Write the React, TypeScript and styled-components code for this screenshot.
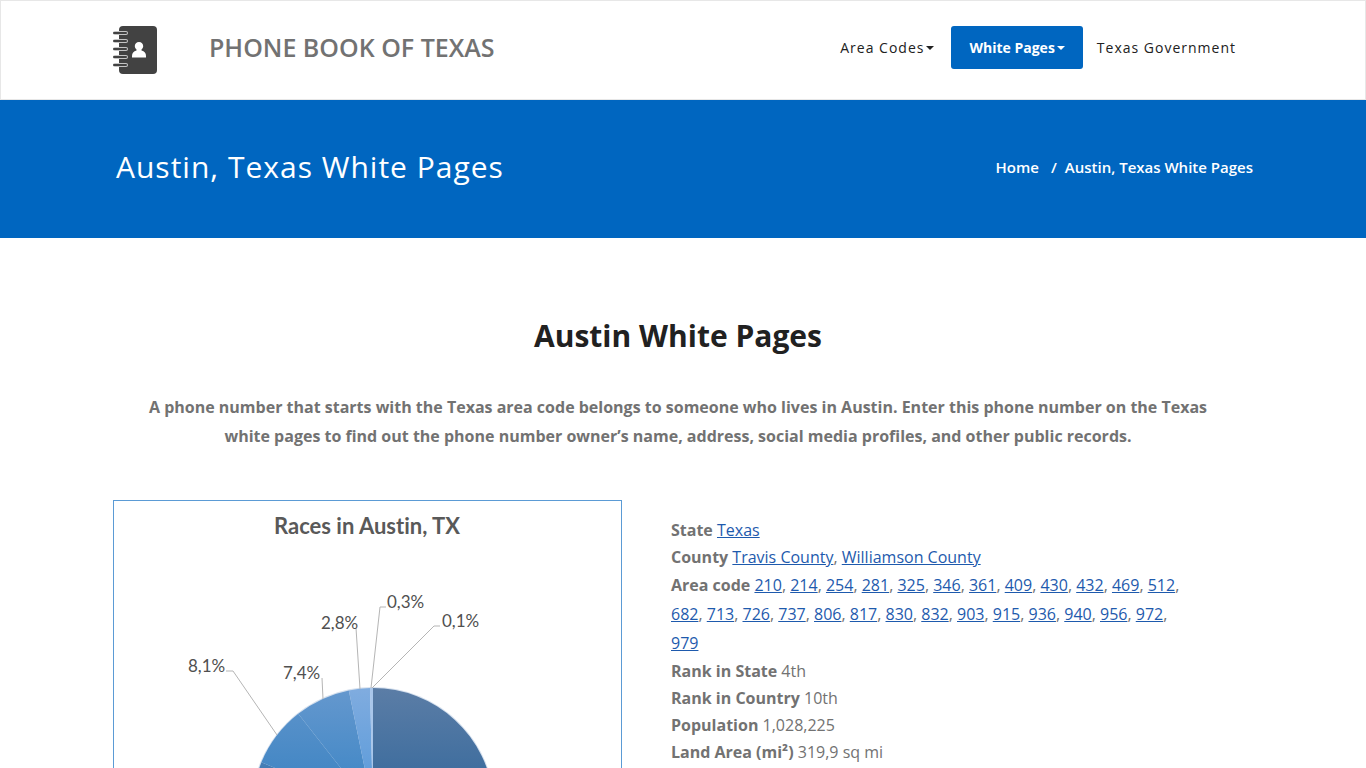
import React from "react";
import styled, { createGlobalStyle, css } from "styled-components";

const GlobalStyle = createGlobalStyle`
  *, *::before, *::after { box-sizing: border-box; }
  body {
    margin: 0;
    background: #fff;
    color: #727272;
    font-family: "Open Sans", "Noto Sans", sans-serif;
    font-size: 16px;
    line-height: 27px;
  }
`;

const Container = styled.div`
  width: 100%;
  max-width: 1170px;
  margin: 0 auto;
  padding: 0 15px;
`;

const Header = styled.header`
  border: 1px solid #e7e7e7;
`;

const HeaderRow = styled(Container)`
  display: flex;
  align-items: center;
  justify-content: space-between;
  min-height: 98px;
  padding-bottom: 6px;
`;

const Brand = styled.a`
  display: flex;
  align-items: center;
  gap: 50px;
  color: #727272;
  font-size: 25px;
  font-weight: 600;
  line-height: 36px;
  text-decoration: none;
`;

const BookLogo = styled.svg`
  display: block;
  width: 46px;
  height: 50px;
  margin-top: 6px;
`;

const Nav = styled.nav`
  display: flex;
`;

const NavLink = styled.a<{ $active?: boolean }>`
  display: flex;
  align-items: center;
  gap: 2px;
  padding: 11px 17px 11px 14px;
  border-radius: 3px;
  color: #212121;
  font-size: 14px;
  letter-spacing: 1px;
  line-height: 21px;
  text-decoration: none;
  ${(p) =>
    p.$active &&
    css`
      padding: 11px 18px;
      background: #0066c0;
      color: #fff;
      font-weight: 700;
      letter-spacing: 0;
    `}
`;

const Caret = styled.span`
  border: 4px solid transparent;
  border-top-color: currentColor;
  border-bottom: 0;
  margin-top: 2px;
`;

const Banner = styled.section`
  background: #0066c0;
  color: #fff;
`;

const BannerRow = styled(Container)`
  display: flex;
  align-items: center;
  justify-content: space-between;
  min-height: 138px;
  padding-bottom: 4px;
`;

const BannerTitle = styled.h1`
  margin: 0;
  padding-left: 3px;
  font-size: 30px;
  font-weight: 400;
  letter-spacing: 1px;
  line-height: 40px;
`;

const Breadcrumb = styled.nav`
  display: flex;
  font-size: 15px;
  font-weight: 600;
  line-height: 24px;
`;

const Crumb = styled.a`
  color: #fff;
  text-decoration: none;
`;

const Separator = styled.span`
  padding: 0 8px 0 12px;
`;

const Main = styled(Container).attrs({ as: "main" })`
  padding-top: 75px;
  padding-bottom: 60px;
`;

const Heading = styled.h2`
  margin: 0 0 34px;
  padding-right: 10px;
  color: #212121;
  font-size: 30px;
  font-weight: 700;
  line-height: 46px;
  text-align: center;
`;

const Lead = styled.p`
  margin: 0 0 49px;
  padding: 0 30px 0 20px;
  font-weight: 700;
  line-height: 29px;
  text-align: center;
`;

const Columns = styled.div`
  display: grid;
  grid-template-columns: 509fr 582fr;
  gap: 49px;
  align-items: start;
`;

const Chart = styled.svg`
  display: block;
  width: 100%;
  height: auto;
  border: 1px solid #5b9bd5;
  font-family: Lato, sans-serif;
  font-variant-ligatures: none;
`;

const ChartTitle = styled.text`
  fill: #595959;
  font-size: 22px;
  font-weight: 700;
`;

const ChartLabel = styled.text`
  fill: #505050;
  font-size: 17px;
`;

const Facts = styled.div`
  padding: 17px 62px 0 0;
`;

const Fact = styled.div<{ $wraps?: boolean }>`
  line-height: ${(p) => (p.$wraps ? 29 : 27)}px;
`;

const FactLink = styled.a`
  color: #1e5aad;
`;

const areaCodes =
  "210 214 254 281 325 346 361 409 430 432 469 512 682 713 726 737 806 817 830 832 903 915 936 940 956 972 979".split(" ");

const LinkList = ({ items }: { items: string[] }) => (
  <>
    {items.map((item, i) => (
      <React.Fragment key={item}>
        {i > 0 && ", "}
        <FactLink href="#">{item}</FactLink>
      </React.Fragment>
    ))}
  </>
);

const CX = 259;
const CY = 308;
const R = 121;

const slices = [
  { share: 47.3, fill: "url(#navy)" },
  { share: 34, fill: "url(#steel)" },
  { share: 8.1, fill: "url(#ocean)" },
  { share: 7.4, fill: "url(#blue)" },
  { share: 2.8, fill: "url(#sky)" },
  { share: 0.4, fill: "#a9c6ea" },
];

const gradients = [
  ["navy", "#5b7da6", "#2b6399"],
  ["steel", "#5f8fc4", "#2d6da8"],
  ["ocean", "#6095cc", "#2f7dbf"],
  ["blue", "#6598ce", "#2f7fc2"],
  ["sky", "#80acdf", "#4a93d8"],
];

const point = (share: number) => {
  const a = (share / 100) * Math.PI * 2;
  return `${(CX + R * Math.sin(a)).toFixed(2)} ${(CY - R * Math.cos(a)).toFixed(2)}`;
};

const Pie = () => {
  let start = 0;
  return (
    <g>
      {slices.map(({ share, fill }) => {
        const d = `M${CX} ${CY}L${point(start)}A${R} ${R} 0 0 1 ${point(start + share)}Z`;
        start += share;
        return <path key={fill} d={d} fill={fill} />;
      })}
    </g>
  );
};

const labels: [string, number, number][] = [
  ["0,3%", 273, 107],
  ["0,1%", 328, 126],
  ["2,8%", 207, 128],
  ["7,4%", 169, 178],
  ["8,1%", 74, 171],
];

const RacesChart = () => (
  <Chart viewBox="0 0 507 480" role="img" aria-label="Races in Austin, TX">
    <defs>
      {gradients.map(([id, top, bottom]) => (
        <linearGradient key={id} id={id} gradientUnits="userSpaceOnUse" x1="0" y1={CY - R} x2="0" y2={CY + R}>
          <stop offset="0" stopColor={top} />
          <stop offset="0.6" stopColor={bottom} />
        </linearGradient>
      ))}
    </defs>
    <ChartTitle x="253" y="33" textAnchor="middle">Races in Austin, TX</ChartTitle>
    <circle cx={CX} cy={CY} r={R + 1} fill="#d5e0ee" />
    <Pie />
    <g fill="none" stroke="#b5b5b5">
      <path d="M272 106h-6L257 187" />
      <path d="M326 125h-6L258 187" />
      <path d="M242 127L246 188" />
      <path d="M208 177L209 198" />
      <path d="M112 170h7L163 234" />
    </g>
    {labels.map(([text, x, y]) => (
      <ChartLabel key={text} x={x} y={y}>{text}</ChartLabel>
    ))}
  </Chart>
);

const Logo = () => (
  <BookLogo viewBox="0 0 46 50" aria-hidden="true">
    <rect x="6" y="1" width="38" height="48" rx="4" fill="#424242" />
    {[8, 16, 24, 32, 40].map((y) => (
      <g key={y}>
        <rect x="0" y={y - 2} width="15" height="4" rx="2" fill="#c4c4c4" />
        <rect x="0" y={y - 1} width="14" height="2" rx="1" fill="#424242" />
      </g>
    ))}
    <path
      fill="#fff"
      d="M26 17c2.500 0 4.200 1.800 4.200 4 0 1.500-.7 2.700-1.700 3.500v1c3 .8 4.500 2.500 4.500 5.500v1.500H19V31c0-3 1.500-4.700 4.500-5.500v-1c-1-.8-1.700-2-1.700-3.500 0-2.200 1.700-4 4.200-4z"
    />
  </BookLogo>
);

export default function App() {
  return (
    <>
      <GlobalStyle />
      <Header>
        <HeaderRow>
          <Brand href="#">
            <Logo />
            PHONE BOOK OF TEXAS
          </Brand>
          <Nav>
            <NavLink href="#">Area Codes<Caret /></NavLink>
            <NavLink href="#" $active>White Pages<Caret /></NavLink>
            <NavLink href="#">Texas Government</NavLink>
          </Nav>
        </HeaderRow>
      </Header>
      <Banner>
        <BannerRow>
          <BannerTitle>Austin, Texas White Pages</BannerTitle>
          <Breadcrumb aria-label="Breadcrumb">
            <Crumb href="#">Home</Crumb>
            <Separator>/</Separator>
            <span>Austin, Texas White Pages</span>
          </Breadcrumb>
        </BannerRow>
      </Banner>
      <Main>
        <Heading>Austin White Pages</Heading>
        <Lead>
          A phone number that starts with the Texas area code belongs to someone who lives in Austin. Enter this phone
          number on the Texas white pages to find out the phone number owner’s name, address, social media profiles, and
          other public records.
        </Lead>
        <Columns>
          <RacesChart />
          <Facts>
            <Fact><b>State</b> <LinkList items={["Texas"]} /></Fact>
            <Fact><b>County</b> <LinkList items={["Travis County", "Williamson County"]} /></Fact>
            <Fact $wraps><b>Area code</b> <LinkList items={areaCodes} /></Fact>
            <Fact><b>Rank in State</b> 4th</Fact>
            <Fact><b>Rank in Country</b> 10th</Fact>
            <Fact><b>Population</b> 1,028,225</Fact>
            <Fact><b>Land Area (mi²)</b> 319,9 sq mi</Fact>
          </Facts>
        </Columns>
      </Main>
    </>
  );
}
